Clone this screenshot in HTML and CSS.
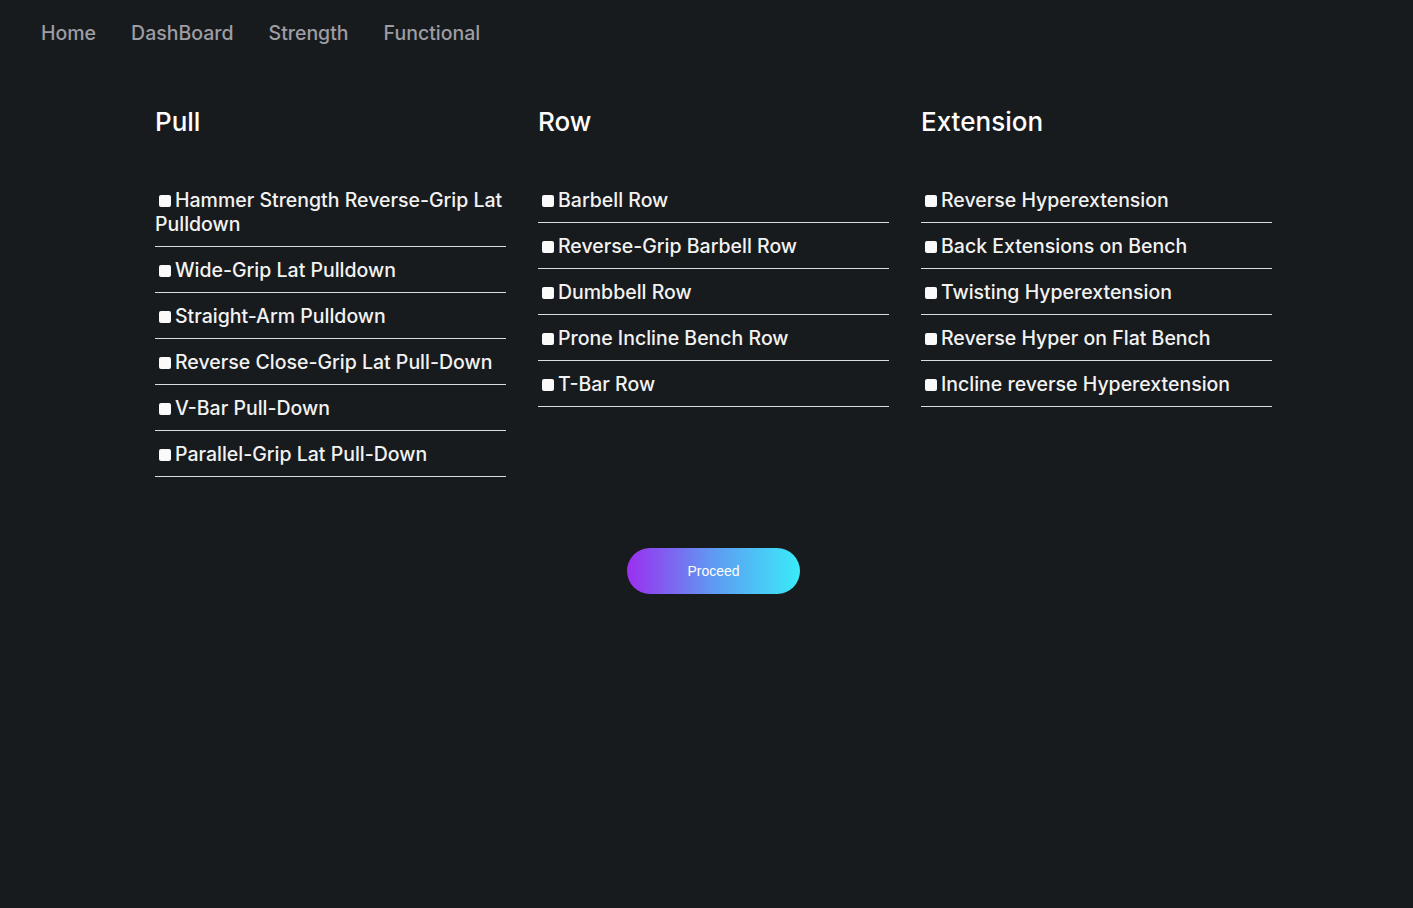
FILE: index.html
```html
<!DOCTYPE html>
<html>
<head>
<meta charset="utf-8">
<link rel="stylesheet" href="styles.css">
</head>
<body>
<nav class="nav">
  <a class="nav-link">Home</a>
  <a class="nav-link">DashBoard</a>
  <a class="nav-link">Strength</a>
  <a class="nav-link">Functional</a>
</nav>
<main class="main">
  <div class="columns">
    <section class="col">
      <h2 class="col-title">Pull</h2>
      <ul class="list">
        <li class="item"><span class="box"></span>Hammer Strength Reverse-Grip Lat Pulldown</li>
        <li class="item"><span class="box"></span>Wide-Grip Lat Pulldown</li>
        <li class="item"><span class="box"></span>Straight-Arm Pulldown</li>
        <li class="item"><span class="box"></span>Reverse Close-Grip Lat Pull-Down</li>
        <li class="item"><span class="box"></span>V-Bar Pull-Down</li>
        <li class="item"><span class="box"></span>Parallel-Grip Lat Pull-Down</li>
      </ul>
    </section>
    <section class="col">
      <h2 class="col-title">Row</h2>
      <ul class="list">
        <li class="item"><span class="box"></span>Barbell Row</li>
        <li class="item"><span class="box"></span>Reverse-Grip Barbell Row</li>
        <li class="item"><span class="box"></span>Dumbbell Row</li>
        <li class="item"><span class="box"></span>Prone Incline Bench Row</li>
        <li class="item"><span class="box"></span>T-Bar Row</li>
      </ul>
    </section>
    <section class="col">
      <h2 class="col-title">Extension</h2>
      <ul class="list">
        <li class="item"><span class="box"></span>Reverse Hyperextension</li>
        <li class="item"><span class="box"></span>Back Extensions on Bench</li>
        <li class="item"><span class="box"></span>Twisting Hyperextension</li>
        <li class="item"><span class="box"></span>Reverse Hyper on Flat Bench</li>
        <li class="item"><span class="box"></span>Incline reverse Hyperextension</li>
      </ul>
    </section>
  </div>
  <div class="actions">
    <button class="proceed">Proceed</button>
  </div>
</main>
</body>
</html>
```
FILE: styles.css
```css
html, body {
  margin: 0;
  padding: 0;
  background: #181b1d;
  height: 100%;
}
body {
  font-family: Inter, "Noto Sans", sans-serif;
  color: #f2f2f2;
}
.nav {
  display: flex;
  gap: 35px;
  padding: 20px 0 0 41px;
  height: 26px;
}
.nav-link {
  color: #9d9da3;
  font-size: 19.5px;
  line-height: 26px;
  font-weight: 500;
}
.main {
  padding: 0 0 0 155px;
}
.columns {
  display: flex;
  gap: 32px;
  align-items: flex-start;
}
.col {
  width: 351px;
}
.col-title {
  margin: 0;
  padding-top: 60px;
  font-size: 26px;
  line-height: 32px;
  font-weight: 500;
  color: #ffffff;
}
.list {
  list-style: none;
  margin: 0;
  padding: 0;
  margin-top: 39px;
}
.item {
  font-size: 19.5px;
  line-height: 24px;
  font-weight: 500;
  padding: 11px 0 10px 0;
  border-bottom: 1.5px solid #dcdcdc;
}
.box {
  display: inline-block;
  width: 12px;
  height: 12px;
  background: #fafafa;
  border-radius: 2px;
  margin: 0 4px 0 4px;
  vertical-align: 0px;
}
.actions {
  display: flex;
  padding: 71px 0 0 472px;
}
.proceed {
  width: 173px;
  height: 46px;
  border: none;
  border-radius: 23px;
  background: linear-gradient(90deg, #9b2ff0 0%, #5f9af2 50%, #3aebf9 100%);
  color: #ffffff;
  font-family: "Liberation Sans", Arial, sans-serif;
  font-size: 14px;
}
```
